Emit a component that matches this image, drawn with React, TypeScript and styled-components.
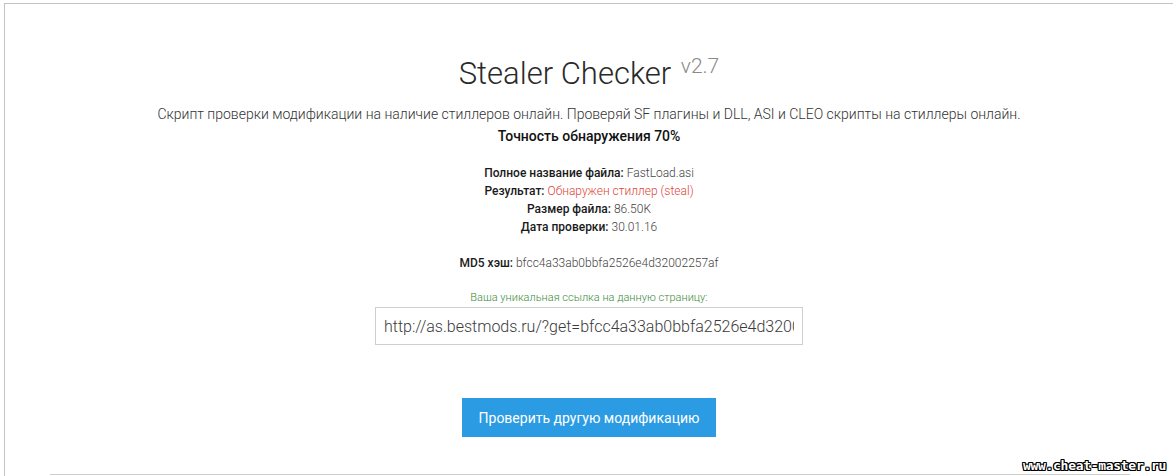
import styled, { createGlobalStyle } from "styled-components";

const GlobalStyle = createGlobalStyle`
  html, body {
    margin: 0;
    padding: 0;
    background: #fff;
  }
  body {
    font-family: Roboto, "Liberation Sans", sans-serif;
    color: #222;
  }
`;

const info = [
  { label: "Полное название файла:", value: "FastLoad.asi" },
  { label: "Результат:", value: "Обнаружен стиллер (steal)", danger: true },
  { label: "Размер файла:", value: "86.50K" },
  { label: "Дата проверки:", value: "30.01.16" },
];

export default function App() {
  return (
    <>
      <GlobalStyle />
      <Page>
        <Frame>
          <Title>
            Stealer Checker <Version>v2.7</Version>
          </Title>
          <Lead>
            Скрипт проверки модификации на наличие стиллеров онлайн. Проверяй SF
            плагины и DLL, ASI и CLEO скрипты на стиллеры онлайн.
          </Lead>
          <Accuracy>Точность обнаружения 70%</Accuracy>
          <InfoList>
            {info.map((row) => (
              <InfoRow key={row.label}>
                <Label>{row.label}</Label>{" "}
                <Value $danger={row.danger}>{row.value}</Value>
              </InfoRow>
            ))}
          </InfoList>
          <InfoRow>
            <Label>MD5 хэш:</Label>{" "}
            <Value>bfcc4a33ab0bbfa2526e4d32002257af</Value>
          </InfoRow>
          <LinkHint>Ваша уникальная ссылка на данную страницу:</LinkHint>
          <LinkInput
            readOnly
            value="http://as.bestmods.ru/?get=bfcc4a33ab0bbfa2526e4d32002257af"
          />
          <CheckButton>Проверить другую модификацию</CheckButton>
          <Divider />
        </Frame>
        <Watermark>www.cheat-master.ru</Watermark>
      </Page>
    </>
  );
}

const Page = styled.div`
  position: relative;
  width: 1173px;
  height: 476px;
  overflow: hidden;
  padding: 3px 0 0 4px;
  box-sizing: border-box;
`;

const Frame = styled.div`
  height: 100%;
  box-sizing: border-box;
  border-top: 1px solid #c4c4c4;
  border-left: 1px solid #c4c4c4;
  display: flex;
  flex-direction: column;
  align-items: center;
`;

const Title = styled.h1`
  margin: 42px 0 0;
  font-size: 31px;
  font-weight: 300;
  line-height: 40px;
  color: #2a2a2a;
`;

const Version = styled.sup`
  font-size: 21px;
  color: #8a8a8a;
  vertical-align: 11px;
  margin-left: 2px;
`;

const Lead = styled.p`
  margin: 10px 0 0;
  font-size: 14px;
  font-weight: 300;
  line-height: 20px;
  color: #333;
`;

const Accuracy = styled.div`
  margin-top: 2px;
  font-size: 14px;
  font-weight: 500;
  line-height: 20px;
  color: #111;
`;

const InfoList = styled.div`
  margin-top: 18px;
  margin-bottom: 18px;
  display: flex;
  flex-direction: column;
  align-items: center;
`;

const InfoRow = styled.div`
  font-size: 12px;
  line-height: 18px;
`;

const Label = styled.b`
  font-weight: 500;
  color: #1a1a1a;
`;

const Value = styled.span<{ $danger?: boolean }>`
  font-weight: 300;
  color: ${({ $danger }) => ($danger ? "#e0453a" : "#444")};
`;

const LinkHint = styled.div`
  margin-top: 18px;
  font-size: 11px;
  font-weight: 300;
  line-height: 16px;
  color: #3d8a3d;
`;

const LinkInput = styled.input`
  margin-top: 1px;
  width: 428px;
  height: 38px;
  box-sizing: border-box;
  border: 1px solid #cfcfcf;
  padding: 0 8px;
  font-family: Roboto, "Liberation Sans", sans-serif;
  font-size: 16px;
  font-weight: 300;
  color: #3a3a3a;
  outline: 0;
`;

const CheckButton = styled.button`
  margin-top: 53px;
  width: 254px;
  height: 39px;
  border: 0;
  background: #2b9be3;
  color: #fff;
  font-family: Roboto, "Liberation Sans", sans-serif;
  font-size: 14px;
  font-weight: 400;
  cursor: pointer;
`;

const Divider = styled.div`
  margin-top: auto;
  margin-bottom: 1px;
  width: 1080px;
  height: 1px;
  background: #cdcdcd;
  align-self: flex-start;
  margin-left: 45px;
`;

const Watermark = styled.div`
  position: absolute;
  right: 7px;
  bottom: 3px;
  font-family: "DejaVu Sans Mono", monospace;
  font-weight: 700;
  font-size: 13px;
  letter-spacing: -0.3px;
  color: #fff;
  text-shadow: 1px 0 0 #000, -1px 0 0 #000, 0 1px 0 #000, 0 -1px 0 #000,
    1px 1px 0 #000, -1px -1px 0 #000, 1px -1px 0 #000, -1px 1px 0 #000;
`;
